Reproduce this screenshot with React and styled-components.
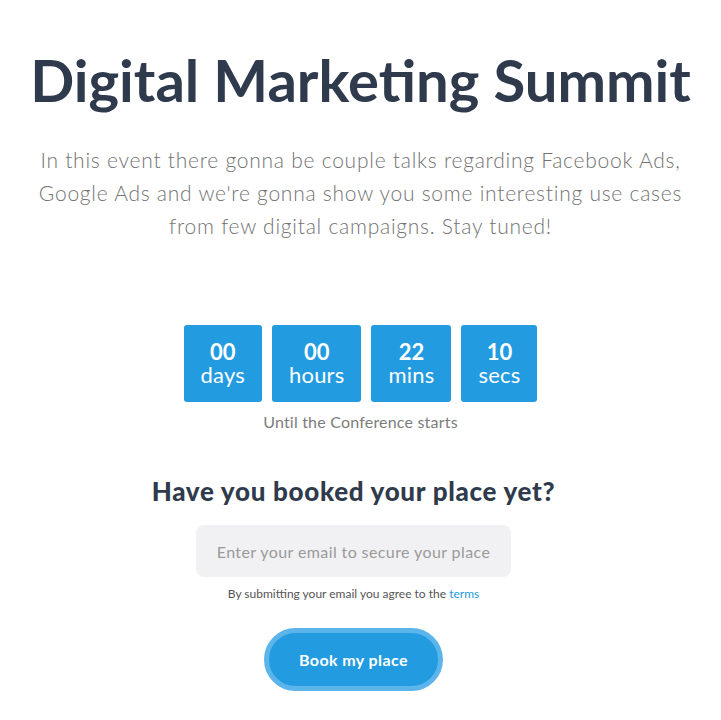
import styled, { createGlobalStyle } from "styled-components";

const GlobalStyle = createGlobalStyle`
  body {
    margin: 0;
    background: #fff;
    font-family: Lato, "Noto Sans", sans-serif;
  }
`;

const Page = styled.main`
  display: flex;
  flex-direction: column;
  align-items: center;
  padding: 44px 20px 0;
  text-align: center;
`;

const Title = styled.h1`
  margin: 0;
  font-size: 58px;
  font-weight: 700;
  line-height: 72px;
  color: #2f3b4c;
`;

const Lead = styled.p`
  margin: 27px 0 0;
  max-width: 660px;
  font-size: 21px;
  line-height: 33px;
  letter-spacing: 0.75px;
  color: #737373;
  font-weight: 300;
`;

const Countdown = styled.div`
  display: flex;
  gap: 10px;
  margin-top: 83px;
`;

const Unit = styled.div`
  display: flex;
  flex-direction: column;
  justify-content: center;
  gap: 1px;
  height: 77px;
  padding: 0 17px;
  box-sizing: border-box;
  background: #229be1;
  border-radius: 3px;
  color: #fff;
`;

const Value = styled.span`
  font-size: 22px;
  font-weight: 700;
  line-height: 22px;
`;

const Label = styled.span`
  font-size: 22px;
  line-height: 22px;
  letter-spacing: 0.2px;
`;

const Caption = styled.div`
  margin-top: 10px;
  font-size: 16px;
  letter-spacing: 0.2px;
  color: #7c7c7c;
`;

const Form = styled.section`
  display: flex;
  flex-direction: column;
  align-items: center;
  margin-right: 14px;
`;

const Subtitle = styled.h2`
  margin: 44px 0 0;
  font-size: 26px;
  font-weight: 900;
  letter-spacing: 0.7px;
  color: #2f3b4c;
`;

const EmailInput = styled.input`
  margin-top: 18px;
  width: 315px;
  height: 52px;
  box-sizing: border-box;
  border: none;
  border-radius: 8px;
  background: #f1f1f3;
  text-align: center;
  font-family: inherit;
  font-size: 16px;
  letter-spacing: 0.4px;
  color: #333;
  &::placeholder {
    color: #9a9a9a;
  }
`;

const Terms = styled.p`
  margin: 9px 0 0;
  font-size: 12px;
  color: #555;
  a {
    color: #229be1;
    text-decoration: none;
  }
`;

const BookButton = styled.button`
  margin-top: 27px;
  width: 179px;
  height: 63px;
  border: 5px solid #5cb5ea;
  border-radius: 32px;
  background: #229be1;
  color: #fff;
  font-family: inherit;
  font-size: 16px;
  font-weight: 700;
  letter-spacing: 0.4px;
  cursor: pointer;
`;

const units = [
  { value: "00", label: "days" },
  { value: "00", label: "hours" },
  { value: "22", label: "mins" },
  { value: "10", label: "secs" },
];

export default function App() {
  return (
    <>
      <GlobalStyle />
      <Page>
        <Title>Digital Marketing Summit</Title>
        <Lead>
          In this event there gonna be couple talks regarding Facebook Ads,
          Google Ads and we're gonna show you some interesting use cases from
          few digital campaigns. Stay tuned!
        </Lead>
        <Countdown>
          {units.map((u) => (
            <Unit key={u.label}>
              <Value>{u.value}</Value>
              <Label>{u.label}</Label>
            </Unit>
          ))}
        </Countdown>
        <Caption>Until the Conference starts</Caption>
        <Form>
          <Subtitle>Have you booked your place yet?</Subtitle>
          <EmailInput type="email" placeholder="Enter your email to secure your place" />
          <Terms>
            By submitting your email you agree to the <a href="#">terms</a>
          </Terms>
          <BookButton>Book my place</BookButton>
        </Form>
      </Page>
    </>
  );
}
